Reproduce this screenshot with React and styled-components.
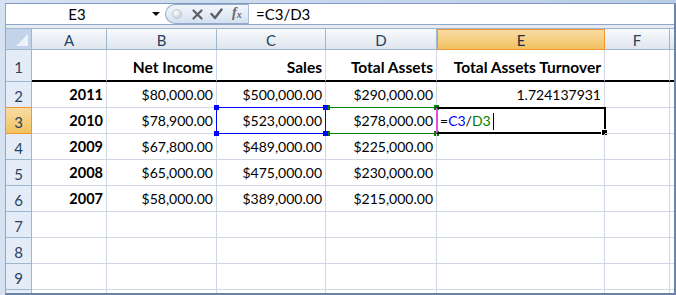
import styled, { createGlobalStyle, css } from 'styled-components';

const GlobalStyle = createGlobalStyle`
  html, body { margin: 0; padding: 0; background: #fff; }
  body { font-family: Lato, "Liberation Sans", sans-serif; }
`;

const COLS = ['A', 'B', 'C', 'D', 'E', 'F'];

const rows = [
  { n: 1, title: true, cells: ['', 'Net Income', 'Sales', 'Total Assets', 'Total Assets Turnover', ''] },
  { n: 2, cells: ['2011', '$80,000.00', '$500,000.00', '$290,000.00', '1.724137931', ''] },
  { n: 3, cells: ['2010', '$78,900.00', '$523,000.00', '$278,000.00', '', ''] },
  { n: 4, cells: ['2009', '$67,800.00', '$489,000.00', '$225,000.00', '', ''] },
  { n: 5, cells: ['2008', '$65,000.00', '$475,000.00', '$230,000.00', '', ''] },
  { n: 6, cells: ['2007', '$58,000.00', '$389,000.00', '$215,000.00', '', ''] },
  { n: 7, cells: ['', '', '', '', '', ''] },
  { n: 8, cells: ['', '', '', '', '', ''] },
  { n: 9, cells: ['', '', '', '', '', ''] },
];

function App() {
  return (
    <>
      <GlobalStyle />
      <Window>
        <Frame>
          <FormulaBar>
            <NameBox>
              <NameText>E3</NameText>
              <DropArrow />
            </NameBox>
            <Pill>
              <Knob />
              <svg width="11" height="11" viewBox="0 0 11 11">
                <path d="M1.5 1.5 L9.5 9.5 M9.5 1.5 L1.5 9.5" stroke="#5f5f5f" strokeWidth="2.2" strokeLinecap="round" />
              </svg>
              <svg width="13" height="12" viewBox="0 0 13 12">
                <path d="M1.5 6 L5 10 L11.5 1.5" stroke="#5f5f5f" strokeWidth="2.4" fill="none" strokeLinecap="round" strokeLinejoin="round" />
              </svg>
              <Fx>f<sub>x</sub></Fx>
            </Pill>
            <FormulaText>=C3/D3</FormulaText>
          </FormulaBar>
          <Gap />
          <Sheet>
            <Corner>
              <svg width="14" height="14" viewBox="0 0 14 14">
                <polygon points="13,1 13,13 1,13" fill="#eef3fa" />
              </svg>
            </Corner>
            {COLS.map((c) => (
              <ColHead key={c} $active={c === 'E'}>{c}</ColHead>
            ))}
            <ColHead />

            {rows.map((r) => (
              <Row key={r.n} r={r} />
            ))}

            <RowHead />
            {COLS.map((c) => <Cell key={c} />)}
            <Cell />
          </Sheet>
        </Frame>
      </Window>
    </>
  );
}

function Row({ r }) {
  return (
    <>
      <RowHead $active={r.n === 3}>{r.n}</RowHead>
      {r.cells.map((text, i) => {
        const col = COLS[i];
        const bold = i === 0 ? 'year' : r.title ? 'title' : '';
        if (r.n === 3 && col === 'C') {
          return (
            <Cell key={col} $top>
              {text}
              <RefBox $color="#0000ff">
                <Handle $color="#0000ff" $x="left" $y="top" />
                <Handle $color="#0000ff" $x="right" $y="top" />
                <Handle $color="#0000ff" $x="left" $y="bottom" />
                <Handle $color="#0000ff" $x="right" $y="bottom" />
              </RefBox>
            </Cell>
          );
        }
        if (r.n === 3 && col === 'D') {
          return (
            <Cell key={col}>
              {text}
              <RefBox $color="#008000" $open>
                <Handle $color="#008000" $x="left" $y="top" />
                <Handle $color="#008000" $x="right" $y="top" />
                <Handle $color="#008000" $x="left" $y="bottom" />
                <Handle $color="#008000" $x="right" $y="bottom" />
              </RefBox>
            </Cell>
          );
        }
        if (r.n === 3 && col === 'E') {
          return (
            <Cell key={col} $left>
              <Eq>=</Eq>
              <Ref $color="#0000ff">C3</Ref>
              <Eq>/</Eq>
              <Ref $color="#008000">D3</Ref>
              <Caret />
              <ActiveBox />
            </Cell>
          );
        }
        return (
          <Cell key={col} $bold={bold} $title={r.title}>
            {text}
          </Cell>
        );
      })}
      <Cell $title={r.title} />
    </>
  );
}

const Window = styled.div`
  width: 676px;
  height: 295px;
  box-sizing: border-box;
  padding: 3px 0 0 5px;
  background: linear-gradient(to right, #d6e2f2, #b9cce6);
  overflow: hidden;
`;

const Frame = styled.div`
  height: 100%;
  box-sizing: border-box;
  display: flex;
  flex-direction: column;
  background: #fff;
  border-left: 1px solid #8ea8cb;
  border-top: 1px solid #7f9bc1;
  border-right: 2px solid #6a84a8;
  border-bottom: 2px solid #6a84a8;
`;

const FormulaBar = styled.div`
  height: 20px;
  display: flex;
  align-items: stretch;
  border-bottom: 1px solid #8ea8cb;
  background: #fff;
  font-size: 15px;
  color: #000;
`;

const NameBox = styled.div`
  width: 159px;
  display: flex;
  align-items: center;
`;

const NameText = styled.span`
  width: 142px;
  text-align: center;
`;

const DropArrow = styled.span`
  margin-left: 4px;
  width: 0;
  height: 0;
  border-left: 4px solid transparent;
  border-right: 4px solid transparent;
  border-top: 4px solid #111;
`;

const Pill = styled.div`
  width: 84px;
  box-sizing: border-box;
  display: flex;
  align-items: center;
  gap: 7px;
  padding-left: 6px;
  border: 1px solid #94abcc;
  border-right-color: #a9bcd8;
  border-radius: 11px 0 0 11px;
  background: linear-gradient(#f3f7fc, #d4e0f1);
`;

const Knob = styled.span`
  width: 8px;
  height: 8px;
  border-radius: 50%;
  margin-right: 3px;
  background: radial-gradient(circle at 35% 35%, #ffffff, #b9c2cd);
  border: 1px solid #c0c8d3;
`;

const Fx = styled.span`
  font-family: "Liberation Serif", serif;
  font-style: italic;
  font-weight: bold;
  font-size: 14px;
  color: #666;
  margin-top: -2px;
  margin-left: 2px;
  sub {
    font-size: 10px;
    vertical-align: -1px;
  }
`;

const FormulaText = styled.div`
  flex: 1;
  padding-left: 7px;
  display: flex;
  align-items: center;
`;

const Gap = styled.div`
  height: 3px;
  background: #e6ebf2;
`;

const Sheet = styled.div`
  flex: 1;
  display: grid;
  grid-template-columns: 26px 75px 110px 109px 111px 168px 65px 1fr;
  grid-template-rows: 21px 32px repeat(8, 26px) 1fr;
  overflow: hidden;
  border-top: 1px solid #9eb6ce;
`;

const headBase = css`
  box-sizing: border-box;
  display: flex;
  align-items: center;
  justify-content: center;
  font-size: 15px;
  color: #27415f;
  border-right: 1px solid #9eb6ce;
  border-bottom: 1px solid #9eb6ce;
`;

const Corner = styled.div`
  ${headBase};
  background: #c3d4ea;
  align-items: flex-end;
  justify-content: flex-end;
  padding: 0 2px 2px 0;
`;

const ColHead = styled.div`
  ${headBase};
  padding-top: 1px;
  background: ${(p) =>
    p.$active ? 'linear-gradient(#f9dca4, #f1c15f)' : 'linear-gradient(#f8fafd, #dfe5ee)'};
  ${(p) => p.$active && css`
    border: 1px solid #f29536;
    color: #1f2f45;
  `}
`;

const RowHead = styled.div`
  ${headBase};
  padding-top: 3px;
  background: ${(p) => (p.$active ? 'linear-gradient(#f9dca4, #f1c15f)' : '#e4ecf7')};
  ${(p) => p.$active && css`
    border-right-color: #f29536;
    border-bottom: 1px solid #f29536;
    border-top: 1px solid #f29536;
    margin-top: -1px;
  `}
`;

const Cell = styled.div`
  position: relative;
  ${(p) => p.$top && 'z-index: 2;'}
  box-sizing: border-box;
  display: flex;
  align-items: flex-end;
  justify-content: ${(p) => (p.$left ? 'flex-start' : 'flex-end')};
  padding: 0 3px 4px 3px;
  font-size: ${(p) => (p.$bold === 'title' ? '15.5px' : p.$bold === 'year' ? '14.5px' : '14px')};
  font-weight: ${(p) => (p.$bold ? 700 : 400)};
  color: #000;
  white-space: nowrap;
  border-right: 1px solid #d0d7e5;
  border-bottom: ${(p) => (p.$title ? '2px solid #000' : '1px solid #d0d7e5')};
`;

const RefBox = styled.span`
  position: absolute;
  left: -1px;
  top: -1px;
  right: -1px;
  bottom: -1px;
  border: 1px solid ${(p) => p.$color};
  ${(p) => p.$open && css`border-left: none; left: 2px;`}
  pointer-events: none;
`;

const Handle = styled.span`
  position: absolute;
  width: 5px;
  height: 5px;
  background: ${(p) => p.$color};
  ${(p) => (p.$x === 'left' ? 'left: -3px;' : 'right: -3px;')}
  ${(p) => (p.$y === 'top' ? 'top: -3px;' : 'bottom: -3px;')}
`;

const ActiveBox = styled.span`
  position: absolute;
  left: -1px;
  top: -1px;
  right: -2px;
  bottom: -1px;
  border: 2px solid #000;
  border-left: 2px solid #e64be6;
  &::after {
    content: '';
    position: absolute;
    right: -4px;
    bottom: -4px;
    width: 5px;
    height: 5px;
    background: #000;
    border: 1px solid #fff;
  }
`;

const Eq = styled.span`
  color: #000;
`;

const Ref = styled.span`
  color: ${(p) => p.$color};
`;

const Caret = styled.span`
  width: 1px;
  height: 17px;
  background: #000;
  margin-left: 2px;
  margin-bottom: -1px;
`;

export default App;
